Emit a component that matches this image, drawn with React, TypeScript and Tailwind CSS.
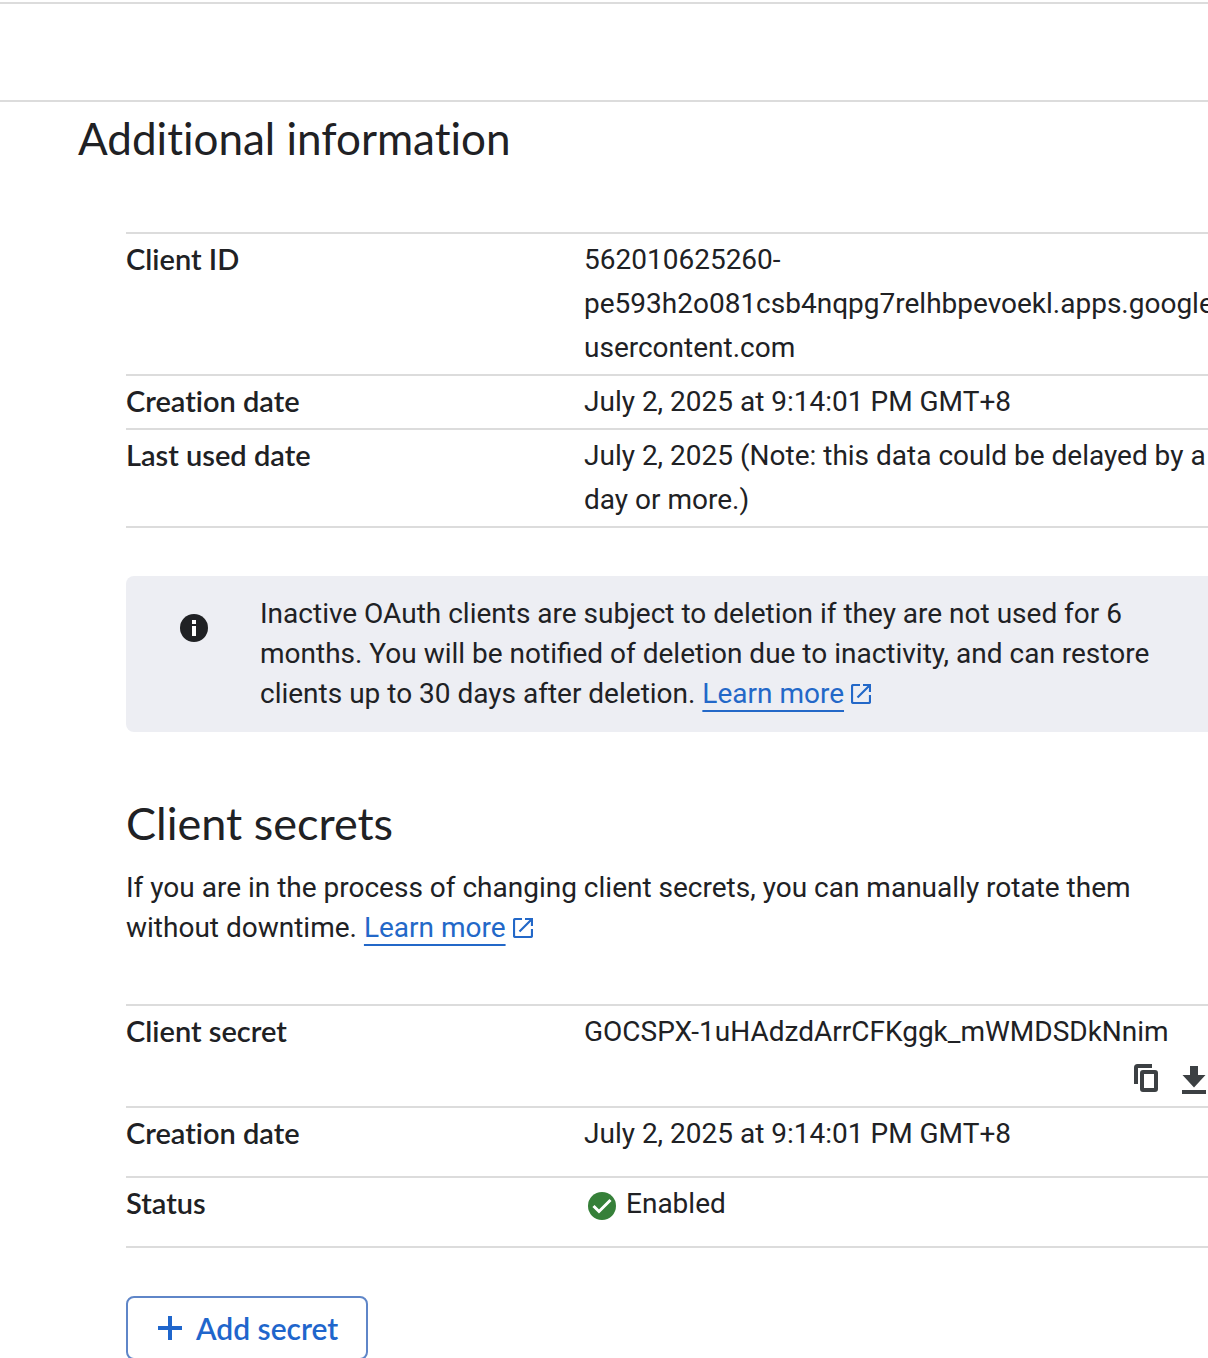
import type { ReactNode } from "react";

function ExternalIcon() {
  return (
    <svg className="ml-[7px] inline-block size-5 align-[-1px]" viewBox="0 0 20 20" fill="none" stroke="currentColor" strokeWidth="2.2" aria-hidden="true">
      <path d="M9 1H2.5A1.5 1.5 0 0 0 1 2.5v15A1.5 1.5 0 0 0 2.5 19h15a1.5 1.5 0 0 0 1.5-1.5V11M12 1h7v7M19 1 6.5 13.5" />
    </svg>
  );
}

function LearnMore() {
  return (
    <a href="#learn-more" className="text-[#2368c8] underline decoration-2 underline-offset-[7px]">
      Learn more
      <ExternalIcon />
    </a>
  );
}

function Row({ label, height, children }: { label: string; height?: "tall"; children: ReactNode }) {
  return (
    <tr className="border-y-2 border-[#dcdcdc] align-top">
      <th scope="row" className="w-[458px] py-1 text-left font-['Lato','Google_Sans',sans-serif] text-[29px] leading-[42px] font-semibold [font-variant-ligatures:none]">
        {label}
      </th>
      <td className={height === "tall" ? "pt-1 pb-5" : "py-1"}>{children}</td>
    </tr>
  );
}

export default function App() {
  return (
    <div className="overflow-x-clip bg-white pt-0.5 font-['Roboto',sans-serif] text-[28px] leading-10 text-[#202124]">
      <header className="h-[100px] border-y-2 border-[#dcdcdc]" />
      <main className="pl-[78px]">
        <h1 className="pt-2 font-['Lato','Google_Sans',sans-serif] text-[44px] leading-[56px] [font-variant-ligatures:none]">Additional information</h1>
        <div className="-mr-6 pt-[66px] pl-12">
          <table className="w-full table-fixed border-collapse leading-[44px]">
            <tbody>
              <Row label="Client ID">
                562010625260-
                <br />
                pe593h2o081csb4nqpg7relhbpevoekl.apps.google
                <wbr />
                usercontent.com
              </Row>
              <Row label="Creation date">July 2, 2025 at 9:14:01 PM GMT+8</Row>
              <Row label="Last used date">July 2, 2025 (Note: this data could be delayed by a day or more.)</Row>
            </tbody>
          </table>

          <aside className="mt-12 flex rounded-lg bg-[#edeef3] py-[18px] pr-16 pl-[54px]">
            <svg className="mt-5 mr-[52px] size-7 shrink-0" viewBox="0 0 28 28" aria-hidden="true">
              <circle cx="14" cy="14" r="14" fill="#202124" />
              <path d="M12 6h4v4h-4zM12 12h4v10h-4z" fill="#fff" />
            </svg>
            <p>
              Inactive OAuth clients are subject to deletion if they are not used for 6 months. You will be notified of
              deletion due to inactivity, and can restore clients up to 30 days after deletion. <LearnMore />
            </p>
          </aside>

          <h2 className="mt-16 font-['Lato','Google_Sans',sans-serif] text-[45px] leading-[54px]">Client secrets</h2>
          <p className="mt-[18px] pr-24">
            If you are in the process of changing client secrets, you can manually rotate them without downtime.{" "}
            <LearnMore />
          </p>

          <table className="mt-14 w-full table-fixed border-collapse leading-[44px]">
            <tbody>
              <Row label="Client secret">
                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
                <div className="flex h-12 items-center justify-end gap-6 pr-[26px] text-[#3c4043]">
                  <button type="button" aria-label="Copy client secret">
                    <svg className="h-8 w-6" viewBox="0 0 24 32" fill="none" stroke="currentColor" aria-hidden="true">
                      <path d="M2 22V5.5A1.5 1.5 0 0 1 3.5 4H18" strokeWidth="4" />
                      <rect x="8" y="10" width="14" height="18" rx="1" strokeWidth="4" />
                    </svg>
                  </button>
                  <button type="button" aria-label="Download client secret">
                    <svg className="h-8 w-6" viewBox="0 0 24 32" fill="currentColor" aria-hidden="true">
                      <path d="M8 4h8v9h7.5L12 25.5.5 13H8zM0 28h24v4H0z" />
                    </svg>
                  </button>
                </div>
              </Row>
              <Row label="Creation date" height="tall">July 2, 2025 at 9:14:01 PM GMT+8</Row>
              <Row label="Status" height="tall">
                <span className="flex items-center gap-2.5 pl-1">
                  <svg className="h-8 w-7" viewBox="0 0 28 32" aria-hidden="true">
                    <circle cx="14" cy="18" r="14" fill="#368039" />
                    <path d="m5.5 18 5.5 5.5L22.5 12" fill="none" stroke="#fff" strokeWidth="3" />
                  </svg>
                  Enabled
                </span>
              </Row>
            </tbody>
          </table>

          <button type="button" className="mt-12 flex h-16 items-center gap-3.5 rounded-lg border-2 border-[#5f86c8] pr-7 pl-[30px] font-['Lato','Google_Sans',sans-serif] text-[30px] leading-[38px] font-semibold text-[#1f66cc]">
            <svg className="size-6" viewBox="0 0 24 24" fill="currentColor" aria-hidden="true">
              <path d="M10 0h4v10h10v4H14v10h-4V14H0v-4h10z" />
            </svg>
            Add secret
          </button>
        </div>
      </main>
    </div>
  );
}
